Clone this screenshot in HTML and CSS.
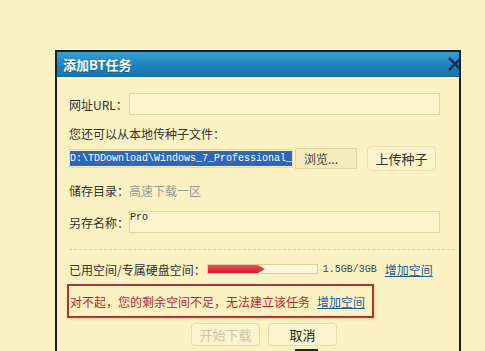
FILE: index.html
```html
<!DOCTYPE html>
<html>
<head>
    <link rel="stylesheet" href="styles.css">
</head>
<body>
    <div class="dialog">
        <div class="title-bar">
            <span class="title">添加BT任务</span>
            <svg class="close" width="14" height="14" viewBox="0 0 14 14">
                <path d="M1 1 L13 13 M13 1 L1 13" stroke="#1b2d5c" stroke-width="2.6" fill="none"/>
            </svg>
        </div>
        <div class="content">
            <!-- URL -->
            <div class="row row-url">
                <span class="label">网址URL：</span>
                <span class="text-box"></span>
            </div>

            <div class="line hint">您还可以从本地传种子文件：</div>

            <!-- Arquivo local -->
            <div class="row row-file">
                <span class="file-box"><span class="file-sel">D:\TDDownload\Windows_7_Professional_</span></span>
                <span class="btn-browse">浏览...</span>
                <span class="btn-upload">上传种子</span>
            </div>

            <div class="line row-dir">
                <span class="label-plain">储存目录：</span><span class="dir-value">高速下载一区</span>
            </div>

            <div class="row row-name">
                <span class="label">另存名称：</span>
                <span class="text-box name-box">Pro</span>
            </div>

            <div class="dashed"></div>

            <!-- Espaço -->
            <div class="row row-space">
                <span class="label-plain">已用空间/专属硬盘空间：</span>
                <span class="progress"><span class="progress-fill" style="width: 57px"></span></span>
                <span class="space-num">1.5GB/3GB</span>
                <a class="link">增加空间</a>
            </div>

            <div class="error-box">
                <span class="error-text">对不起，您的剩余空间不足，无法建立该任务</span>
                <a class="link">增加空间</a>
            </div>

            <div class="row row-buttons">
                <span class="btn btn-disabled">开始下载</span>
                <span class="btn">取消</span>
            </div>
            <div class="cursor-mark"></div>
        </div>
    </div>
</body>
</html>
```

FILE: styles.css
```css
body {
    margin: 0;
    background: #fbf2c4;
    font-family: "Noto Sans CJK SC", "Noto Sans", sans-serif;
    font-size: 12px;
    color: #333;
    width: 485px;
    height: 351px;
    overflow: hidden;
}
.dialog {
    margin: 50px 0 0 55px;
    width: 402px;
    height: 299px;
    overflow: hidden;
    border: 2px solid #17222e;
    border-bottom: none;
    background: #fbf2c4;
}
.title-bar {
    height: 24px;
    display: flex;
    align-items: center;
    justify-content: space-between;
    background: linear-gradient(#379fd2, #1e80ba 60%, #1a74ab);
    border-bottom: 1px solid #1a6a9a;
}
.title {
    color: #fff;
    font-weight: bold;
    font-size: 13px;
    padding-left: 6px;
    text-shadow: 0 1px 0 #15608e;
}
.close {
    margin-right: -3px;
}
.content {
    padding: 0 4px 0 12px;
}
.row {
    display: flex;
    align-items: center;
}
.line {
    line-height: 16px;
    height: 16px;
}
.label {
    width: 60px;
    white-space: nowrap;
}
.text-box {
    width: 309px;
    height: 20px;
    border: 1px solid #e0d4a4;
    background: #fcf4cc;
    box-sizing: content-box;
}
.row-url {
    margin-top: 16px;
}
.hint {
    margin-top: 11px;
}
.row-file {
    margin-top: 4px;
    height: 25px;
}
.file-box {
    width: 222px;
    height: 17px;
    border: 1px solid #e5d9a9;
    display: flex;
    align-items: center;
}
.file-sel {
    background: #2f66b8;
    color: #fff;
    font-family: "Liberation Mono", monospace;
    font-size: 10px;
    line-height: 15px;
    white-space: nowrap;
    overflow: hidden;
}
.btn-browse {
    margin-left: 2px;
    width: 52px;
    height: 19px;
    padding-left: 8px;
    border: 1px solid #e2d5a4;
    background: #f5ebbd;
    line-height: 19px;
    color: #444;
}
.btn-upload {
    margin-left: 10px;
    width: 67px;
    height: 23px;
    border: 1px solid #eadfb2;
    border-radius: 4px;
    background: #fbf3cc;
    text-align: center;
    line-height: 23px;
    font-size: 13px;
    color: #333;
}
.row-dir {
    margin-top: 12px;
}
.dir-value {
    color: #9a9a90;
}
.row-name {
    margin-top: 12px;
}
.name-box {
    font-family: "Liberation Mono", monospace;
    font-size: 10px;
    line-height: 12px;
    padding: 0;
    color: #222;
}
.dashed {
    margin-top: 16px;
    border-top: 1px dashed #dcd0a0;
}
.row-space {
    margin-top: 11px;
    height: 16px;
}
.progress {
    margin-left: 1px;
    width: 109px;
    height: 8px;
    border: 1px solid #dcd0a0;
    background: #fbf6dc;
    display: flex;
}
.progress-fill {
    height: 8px;
    background: linear-gradient(#f0505a, #cf1a2c);
    clip-path: polygon(0 0, 88% 0, 100% 50%, 88% 100%, 0 100%);
}
.space-num {
    margin-left: 5px;
    font-family: "Liberation Mono", monospace;
    font-size: 10px;
    color: #444;
}
.link {
    margin-left: 8px;
    color: #1f5f9a;
    text-decoration: underline;
}
.error-box {
    margin: 7px 0 0 -2px;
    display: inline-flex;
    align-items: center;
    height: 30px;
    padding: 0 7px 0 1px;
    border: 2px solid #a8343c;
    box-shadow: 1px 1px 3px #e0cf9a;
}
.error-text {
    color: #b42a36;
}
.error-box .link {
    margin-left: 7px;
}
.row-buttons {
    margin-top: 5px;
    padding-left: 122px;
    gap: 8px;
}
.btn {
    width: 67px;
    height: 21px;
    border: 1px solid #e6dab0;
    border-radius: 4px;
    background: #fcf4ce;
    text-align: center;
    line-height: 21px;
    font-size: 13px;
    color: #222;
}
.btn-disabled {
    color: #cfc5a0;
}
.cursor-mark {
    margin: 3px 0 0 226px;
    width: 23px;
    height: 4px;
    background: #222;
}
```
